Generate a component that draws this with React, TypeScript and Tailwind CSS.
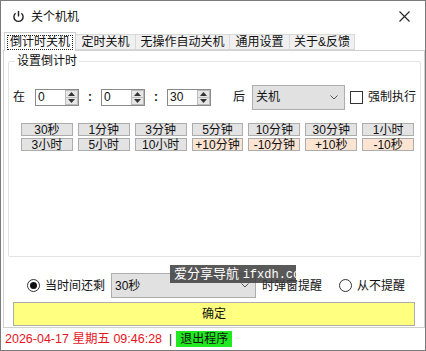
import React from "react";

const row1 = ["30秒", "1分钟", "3分钟", "5分钟", "10分钟", "30分钟", "1小时"];
const row2 = ["3小时", "5小时", "10小时", "+10分钟", "-10分钟", "+10秒", "-10秒"];

function PowerIcon() {
  return (
    <svg width="13" height="13" viewBox="0 0 13 13" fill="none" stroke="#222" strokeWidth="1.4">
      <path d="M6.5 1 V6.5" />
      <path d="M3.6 3.2 A4.6 4.6 0 1 0 9.4 3.2" />
    </svg>
  );
}

function Spin({ value }: { value: string }) {
  return (
    <div className="w-[44px] h-[17px] border border-[#8a8a8a] bg-white flex">
      <div className="flex-1 pl-[2px] text-[12px] leading-[15px]">{value}</div>
      <div className="w-[13px] flex flex-col">
        <div className="flex-1 bg-[#e6e6e6] border border-[#bcbcbc] flex items-center justify-center">
          <svg width="7" height="4" viewBox="0 0 7 4">
            <path d="M3.5 0 L7 4 L0 4 Z" fill="#333" />
          </svg>
        </div>
        <div className="flex-1 bg-[#e6e6e6] border border-t-0 border-[#bcbcbc] flex items-center justify-center">
          <svg width="7" height="4" viewBox="0 0 7 4">
            <path d="M0 0 L7 0 L3.5 4 Z" fill="#333" />
          </svg>
        </div>
      </div>
    </div>
  );
}

function Combo({ value, className }: { value: string; className: string }) {
  return (
    <div className={`h-[25px] border border-[#adadad] bg-[#e1e1e1] flex items-center pl-[3px] pr-[6px] text-[12px] ${className}`}>
      <span className="flex-1">{value}</span>
      <svg width="8" height="5" viewBox="0 0 8 5" fill="none" stroke="#555" strokeWidth="1">
        <path d="M0.5 0.5 L4 4 L7.5 0.5" />
      </svg>
    </div>
  );
}

function Radio({ checked }: { checked?: boolean }) {
  return (
    <div className="w-[13px] h-[13px] rounded-full border border-[#333] bg-white flex items-center justify-center">
      {checked && <div className="w-[7px] h-[7px] rounded-full bg-[#111]" />}
    </div>
  );
}

function QuickButton({ label, warm }: { label: string; warm?: boolean }) {
  return (
    <div
      className={`h-[13px] border border-[#adadad] flex items-center justify-center text-[12px] leading-none ${
        warm ? "bg-[#fbe4d2]" : "bg-[#e3e3e3]"
      }`}
    >
      {label}
    </div>
  );
}

export default function App() {
  return (
    <div className="w-[426px] h-[351px] bg-white border border-[#7a7a7a] flex flex-col text-[#111] font-['Liberation_Sans','Noto_Sans_CJK_SC',sans-serif] relative overflow-hidden">
      {/* title bar */}
      <div className="h-[31px] flex items-center pl-[11px] pr-[15px] shrink-0">
        <PowerIcon />
        <span className="ml-[6px] text-[12px]">关个机机</span>
        <div className="flex-1" />
        <svg width="11" height="11" viewBox="0 0 11 11" stroke="#222" strokeWidth="1.1">
          <path d="M0.5 0.5 L10.5 10.5 M10.5 0.5 L0.5 10.5" />
        </svg>
      </div>

      {/* tabs */}
      <div className="h-[18px] flex items-end pl-[3px] shrink-0 text-[12px]">
        <div className="relative z-10 -mb-px h-[19px] w-[72px] bg-white border border-b-0 border-[#d0d0d0] flex items-center justify-center">
          <span className="px-[2px] border border-dotted border-[#222] leading-[13px]">倒计时关机</span>
        </div>
        <div className="h-[16px] w-[60px] bg-[#f0f0f0] border border-l-0 border-[#d9d9d9] flex items-center justify-center">定时关机</div>
        <div className="h-[16px] w-[94px] bg-[#f0f0f0] border border-l-0 border-[#d9d9d9] flex items-center justify-center">无操作自动关机</div>
        <div className="h-[16px] w-[60px] bg-[#f0f0f0] border border-l-0 border-[#d9d9d9] flex items-center justify-center">通用设置</div>
        <div className="h-[16px] w-[65px] bg-[#f0f0f0] border border-l-0 border-[#d9d9d9] flex items-center justify-center">关于&amp;反馈</div>
      </div>

      {/* panel */}
      <div className="flex-1 ml-[2px] border border-[#d0d0d0] flex flex-col">
        {/* group box */}
        <div className="relative mt-[10px] ml-[4px] mr-[3px] h-[196px] border border-[#e4e4e4] rounded-[2px]">
          <span className="absolute -top-[9px] left-[6px] bg-white px-[2px] text-[12px] leading-[16px]">设置倒计时</span>

          <div className="mt-[23px] h-[24px] flex items-center text-[12px]">
            <span className="ml-[4px] w-[12px]">在</span>
            <div className="ml-[10px]"><Spin value="0" /></div>
            <span className="ml-[9px] w-[13px] font-bold">:</span>
            <Spin value="0" />
            <span className="ml-[9px] w-[13px] font-bold">:</span>
            <Spin value="30" />
            <span className="ml-[22px] w-[11px]">后</span>
            <Combo value="关机" className="ml-[8px] w-[93px]" />
            <div className="ml-[5px] w-[13px] h-[13px] border border-[#333] bg-white" />
            <span className="ml-[5px]">强制执行</span>
          </div>

          <div className="mt-[14px] ml-[12px] mr-[6px] grid grid-cols-7 gap-x-[5px] gap-y-[2px]">
            {row1.map((t) => (
              <QuickButton key={t} label={t} />
            ))}
            {row2.map((t, i) => (
              <QuickButton key={t} label={t} warm={i >= 3} />
            ))}
          </div>
        </div>

        <div className="flex-1" />

        {/* reminder row */}
        <div className="h-[25px] flex items-center pl-[23px] text-[12px]">
          <Radio checked />
          <span className="ml-[5px]">当时间还剩</span>
          <Combo value="30秒" className="ml-[6px] w-[145px]" />
          <span className="ml-[6px]">时弹窗提醒</span>
          <div className="ml-[17px]"><Radio /></div>
          <span className="ml-[5px]">从不提醒</span>
        </div>

        <div className="mt-[4px] mb-[1px] mx-[9px] h-[24px] bg-[#ffff80] border border-[#adadad] flex items-center justify-center text-[12px]">
          确定
        </div>
      </div>

      {/* status bar */}
      <div className="h-[22px] shrink-0 flex items-center pl-[4px] text-[12.5px]">
        <span className="text-[#e8141e]">2026-04-17 星期五 09:46:28</span>
        <span className="ml-[7px] text-[12px]">|</span>
        <span className="ml-[4px] h-[16px] px-[4px] bg-[#22e822] text-[12px] leading-[16px]">退出程序</span>
      </div>

      {/* watermark overlay */}
      <div className="absolute left-[169px] top-[264px] w-[126px] h-[18px] bg-[#3c3c3c]/85 text-white text-[13px] leading-[18px] px-[4px] whitespace-nowrap">
        爱分享导航 <span className="font-['Liberation_Mono',monospace] text-[12px]">ifxdh.com</span>
      </div>
    </div>
  );
}
